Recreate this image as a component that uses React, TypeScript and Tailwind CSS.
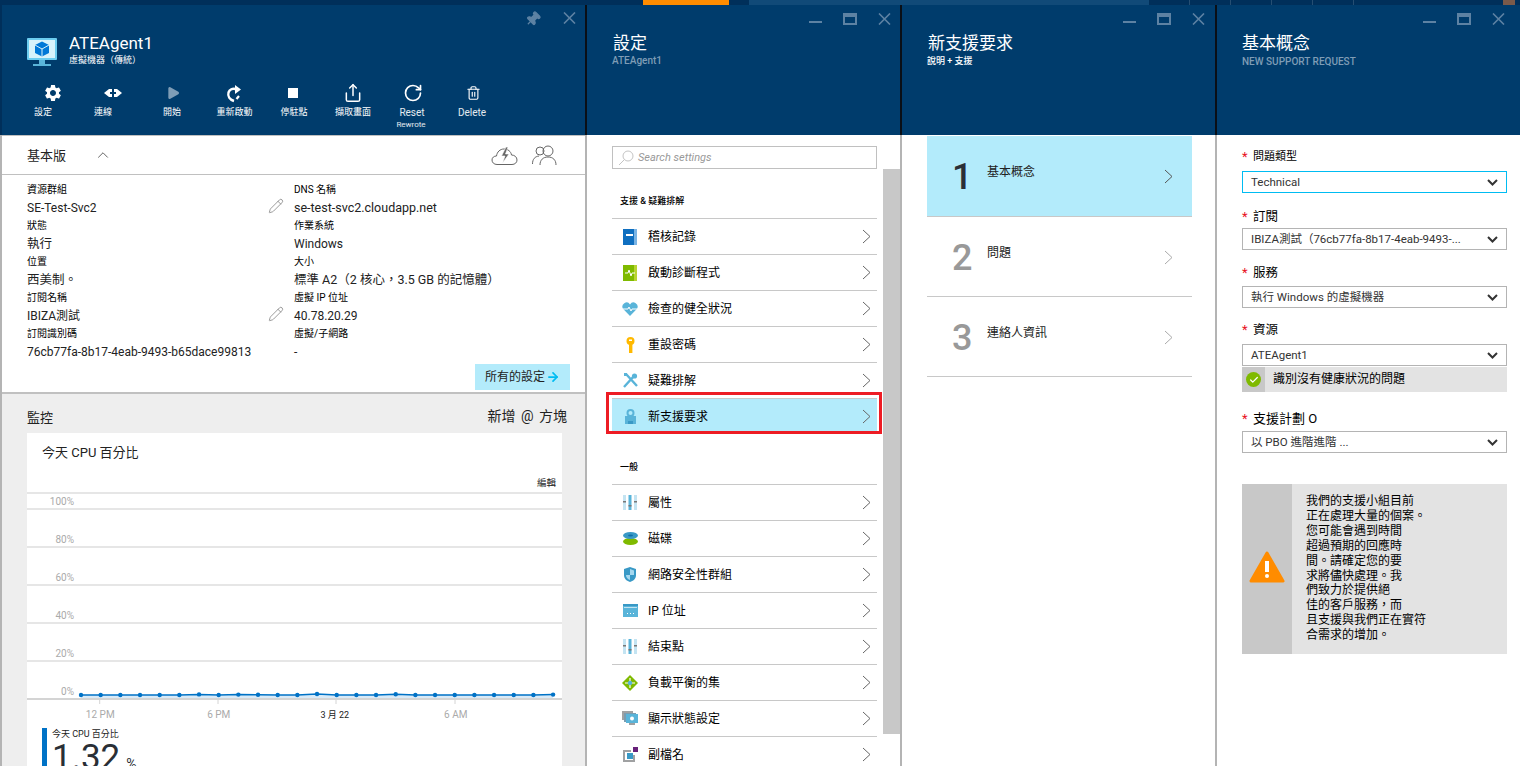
import { ChevronUp, Pin, Play, RotateCw, Share, Trash2, Pencil, ArrowRight, Check } from 'lucide-react';
import { MdSettings } from 'react-icons/md';

const FONT = 'font-["Roboto","Noto_Sans_CJK_TC",sans-serif]';

function CloseX() {
  return (
    <svg width="13" height="12" viewBox="0 0 13 12" className="shrink-0">
      <path d="M1 0.500L12 11.500M12 0.500L1 11.500" stroke="currentColor" strokeWidth="1.6" fill="none" />
    </svg>
  );
}

function WindowControls({ pad }: { pad: string }) {
  return (
    <div className={`flex justify-end items-start gap-[21px] h-[28px] pt-[8px] text-[#5d82a3] ${pad}`}>
      <div className="w-[13px] h-[2px] mt-[8px] bg-current" />
      <div className="w-[14px] h-[12px] border-2 border-t-[4px] border-current" />
      <CloseX />
    </div>
  );
}

function BladeHead({ title, sub, subClass, pad }: { title: string; sub: string; subClass: string; pad: string }) {
  return (
    <div className="h-[130px] bg-[#003c6c] shrink-0 -mr-[2px] border-r-2 border-[#0a0f16]">
      <WindowControls pad={pad} />
      <div className="pl-[25px]">
        <div className="text-[17px] leading-[20px] text-white pl-[1px]">{title}</div>
        <div className={`leading-[12px] mt-[2px] ${subClass}`}>{sub}</div>
      </div>
    </div>
  );
}

function Cmd({ icon, label, sub, dim, labelClass }: { icon: React.ReactNode; label: string; sub?: string; dim?: boolean; labelClass?: string }) {
  return (
    <div className="flex flex-col items-center shrink-0 w-[60px]">
      <div className={`h-[22px] flex items-center justify-center ${dim ? 'text-[#7f9db6]' : 'text-white'}`}>{icon}</div>
      <div className={`leading-[12px] whitespace-nowrap ${labelClass ?? 'text-[9px] text-white mt-[2px]'}`}>{label}</div>
      {sub && <div className="text-[8px] leading-[10px] mt-[1px] mr-[4px] text-white/90">{sub}</div>}
    </div>
  );
}

function Field({ label, value, pencil, big }: { label: string; value: string; pencil?: boolean; big?: boolean }) {
  return (
    <div className="h-[36px] relative">
      <div className="text-[10px] leading-[12px] text-black whitespace-nowrap">{label}</div>
      <div className={`${big ? 'text-[12.500px]' : 'text-[12px]'} leading-[18px] mt-[3px] text-[#222] whitespace-nowrap`}>{value}</div>
      {pencil && <Pencil className="absolute right-[10px] top-[14px] w-[16px] h-[16px] text-[#777]" strokeWidth={1.1} />}
    </div>
  );
}

function RowChevron({ color }: { color: string }) {
  return (
    <svg width="9" height="15" viewBox="0 0 9 15" className={`shrink-0 ${color}`}>
      <path d="M1 1L8 7.500L1 14" stroke="currentColor" strokeWidth="1" fill="none" />
    </svg>
  );
}

function BookIcon() {
  return (
    <svg width="14" height="16" viewBox="0 0 14 16"><rect width="14" height="16" fill="#0f6fc0" /><rect x="11" width="3" height="16" fill="#7ab4e4" /><rect x="3" y="5" width="7" height="2" fill="#fff" /></svg>
  );
}
function DiagIcon() {
  return (
    <svg width="14" height="16" viewBox="0 0 14 16"><rect width="14" height="16" fill="#7fba00" /><rect x="11" width="3" height="16" fill="#b8d432" /><path d="M2 8h3l1-3 2 6 1-3h3" stroke="#fff" strokeWidth="1" fill="none" /></svg>
  );
}
function HeartIcon() {
  return (
    <svg width="16" height="14" viewBox="0 0 16 14"><path d="M8 14L1.200 7A4 4 0 0 1 8 2.400 4 4 0 0 1 14.800 7Z" fill="#59b4d9" /><path d="M1 7h5l1-2 2 4 1-2h5" stroke="#fff" strokeWidth="1" fill="none" /></svg>
  );
}
function KeyIcon() {
  return (
    <svg width="9" height="16" viewBox="0 0 9 16"><circle cx="4.500" cy="4" r="4" fill="#ffb900" /><rect x="3" y="6" width="3.400" height="10" fill="#ffb900" /><rect x="3" y="2.500" width="3" height="1.500" fill="#fff" /></svg>
  );
}
function ToolsIcon() {
  return (
    <svg width="15" height="15" viewBox="0 0 15 15"><path d="M1 14L11 3M3 1l11 12" stroke="#59b4d9" strokeWidth="2.400" /><circle cx="11.500" cy="3" r="2.600" fill="#59b4d9" /><rect x="1" y="0" width="3" height="3" fill="#59b4d9" /></svg>
  );
}
function SupportIcon() {
  return (
    <svg width="11" height="15" viewBox="0 0 11 15"><rect y="7" width="11" height="8" fill="#59b4d9" /><circle cx="5.500" cy="4" r="4" fill="#59b4d9" /><circle cx="5.500" cy="4" r="2" fill="#b3ebfb" /><path d="M3 15v-3h5v3" fill="#3999c6" /></svg>
  );
}
function SlidersIcon() {
  return (
    <svg width="14" height="15" viewBox="0 0 14 15"><rect width="3" height="15" fill="#c4e4f2" /><rect x="5.500" width="3" height="15" fill="#59b4d9" /><rect x="11" width="3" height="15" fill="#c4e4f2" /><rect y="6" width="3" height="1.500" fill="#777" /><rect x="5.500" y="10" width="3" height="1.500" fill="#777" /><rect x="11" y="6" width="3" height="1.500" fill="#777" /></svg>
  );
}
function DiskIcon() {
  return (
    <svg width="15" height="13" viewBox="0 0 15 13"><ellipse cx="7.500" cy="9.500" rx="7.500" ry="3.500" fill="#7fba00" /><ellipse cx="7.500" cy="3.500" rx="7.500" ry="3.500" fill="#3999c6" /><ellipse cx="7.500" cy="3.500" rx="2.500" ry="1" fill="#0f6fa8" /></svg>
  );
}
function ShieldIcon() {
  return (
    <svg width="12" height="15" viewBox="0 0 12 15"><path d="M6 0l6 2v6c0 4-3 6-6 7-3-1-6-3-6-7V2Z" fill="#3999c6" /><path d="M6 2l4 1.400V8H6v5C3.500 12 2 10.500 2 8h4Z" fill="#a5d8ef" /></svg>
  );
}
function IpIcon() {
  return (
    <svg width="15" height="13" viewBox="0 0 15 13"><rect width="15" height="13" fill="#59b4d9" /><rect width="15" height="2" fill="#3999c6" /><rect x="1" y="3" width="13" height="1" fill="#c4e4f2" /><rect x="4" y="9" width="1" height="1" fill="#fff" /><rect x="7" y="9" width="1" height="1" fill="#fff" /><rect x="10" y="9" width="1" height="1" fill="#fff" /></svg>
  );
}
function LbIcon() {
  return (
    <svg width="16" height="16" viewBox="0 0 16 16"><path d="M8 0l8 8-8 8-8-8Z" fill="#7fba00" /><path d="M8 3v10M3 8h10" stroke="#fff" strokeWidth="1.200" /><circle cx="8" cy="8" r="2.200" fill="#59b4d9" /></svg>
  );
}
function ScreensIcon() {
  return (
    <svg width="16" height="15" viewBox="0 0 16 15"><rect width="11" height="9" fill="#a0a1a2" /><rect x="2" y="2" width="12" height="9" fill="#7a9cb0" /><rect x="4" y="3" width="12" height="9" fill="#59b4d9" /><circle cx="10" cy="7.500" r="2" fill="#fff" /><rect x="7" y="12" width="6" height="2" fill="#a0a1a2" /></svg>
  );
}
function AliasIcon() {
  return (
    <svg width="15" height="15" viewBox="0 0 15 15"><path d="M0 3h8v2H2v8h8V8h2v7H0Z" fill="#a0a1a2" /><rect x="4" y="6" width="6" height="6" fill="#3999c6" /><rect x="10" y="0" width="5" height="5" fill="#68217a" /></svg>
  );
}

function MenuRow({ icon, label, active }: { icon: React.ReactNode; label: string; active?: boolean }) {
  return (
    <div className={`h-[36px] border-t border-[#c8c8c8] flex items-center pr-[6px] ${active ? 'bg-[#b3ebfb]' : ''}`}>
      <div className="w-[35px] pl-[1px] flex justify-center shrink-0 mr-[1px]">{icon}</div>
      <div className="flex-1 text-[12px] text-black whitespace-nowrap">{label}</div>
      <RowChevron color="text-[#666]" />
    </div>
  );
}

function ChartSeries() {
  const points = [0, 0, 0, 0, 0, 0, -0.6, 0, -0.4, -0.3, 0, 0, -1, 0, 0, 0, -0.7, 0, 0, 0, 0, 0, 0, 0, -0.4];
  const x = (i: number) => 54 + i * 19.67;
  const d = points.map((p, i) => `${x(i).toFixed(1)},${(p + 262).toFixed(1)}`).join(' ');
  return (
    <svg width="535" height="285" viewBox="0 0 535 285" className="absolute left-0 top-0">
      <path d={`M54,265 L${d.replace(/ /g, ' L')} L526,265Z`} fill="#0072c6" opacity="0.15" />
      <polyline points={d} fill="none" stroke="#0072c6" strokeWidth="1.500" />
      {points.map((p, i) => (
        <circle key={i} cx={x(i)} cy={p + 262} r="2.200" fill="#0072c6" />
      ))}
      {[72.7, 191, 309, 428].map((t) => (
        <line key={t} x1={t} x2={t} y1="267" y2="271" stroke="#d4d4d4" />
      ))}
    </svg>
  );
}

function SelectBox({ value, active }: { value: string; active?: boolean }) {
  return (
    <div className={`h-[22px] border flex items-center justify-between pl-[8px] pr-[8px] ${active ? 'border-[#00bcf2]' : 'border-[#b4b4b4]'}`}>
      <span className="text-[11.500px] text-[#333] whitespace-nowrap pt-[1px]">{value}</span>
      <svg width="11" height="7" viewBox="0 0 11 7" className="text-[#333]">
        <path d="M1 1L5.500 5.500L10 1" stroke="currentColor" strokeWidth="2" fill="none" />
      </svg>
    </div>
  );
}

function FormLabel({ text, size }: { text: string; size: string }) {
  return (
    <div className={`flex items-center h-[18px] text-black whitespace-nowrap ${size}`}>
      <span className="text-[#e81123] w-[11px] text-[13px] leading-[18px]">*</span>
      {text}
    </div>
  );
}

const warningLines = ['我們的支援小組目前', '正在處理大量的個案。', '您可能會遇到時間', '超過預期的回應時', '間。請確定您的要', '求將儘快處理。我', '們致力於提供絕', '佳的客戶服務，而', '且支援與我們正在實符', '合需求的增加。'];

export default function App() {
  return (
    <div className={`w-[1520px] h-[766px] overflow-hidden bg-white flex flex-col ${FONT}`}>
      <div className="h-[5px] shrink-0 bg-[#002f5a] flex">
        <div className="w-[643px]" />
        <div className="w-[86px] bg-[#ff8c00]" />
        <div className="w-[20px]" />
        <div className="w-[400px] bg-[#114a78]" />
        <div className="w-[41px] border-r border-white/15" />
        <div className="w-[41px] border-r border-white/15" />
        <div className="w-[41px] border-r border-white/15" />
        <div className="w-[41px] border-r border-white/15" />
        <div className="w-[41px] border-r border-white/15" />
        <div className="flex-1 flex justify-end pr-[5px]"><div className="w-[12px] h-[5px] bg-[#7a5a4a]" /></div>
      </div>
      <div className="flex-1 flex min-h-0">
        {/* vm blade */}
        <div className="w-[587px] shrink-0 border-x-2 border-[#b4b4b4] flex flex-col min-h-0">
          <div className="h-[130px] bg-[#003c6c] shrink-0 -mx-[2px] border-x-2 border-l-[#002f5a] border-r-[#0a0f16]">
            <div className="flex justify-end items-start gap-[22px] h-[22px] pr-[9px] pt-[7px] text-[#5d82a3]">
              <Pin className="w-[16px] h-[16px] rotate-45 -mt-[1px]" fill="currentColor" />
              <CloseX />
            </div>
            <div className="flex items-start pl-[25px] h-[33px] mt-[6px]">
              <svg width="30" height="28" viewBox="0 0 30 28" className="mt-[5px] shrink-0">
                <rect width="30" height="22" rx="1" fill="#6ccdf0" />
                <rect x="2" y="2" width="26" height="18" fill="#d8f3fb" />
                <path d="M15 3.500l7 3.500v8l-7 3.500-7-3.500V7Z" fill="#0078d7" />
                <path d="M15 11l7-4M15 11L8 7M15 11v7.500" stroke="#d8f3fb" strokeWidth="1" fill="none" />
                <rect x="12" y="22" width="6" height="4" fill="#59b4d9" />
                <rect x="6" y="26" width="18" height="2" fill="#59b4d9" />
              </svg>
              <div className="ml-[12px]">
                <div className="text-[17px] leading-[20px] text-white">ATEAgent1</div>
                <div className="text-[9px] leading-[12px] mt-[1px] text-white whitespace-nowrap">虛擬機器（傳統）</div>
              </div>
            </div>
            <div className="flex pl-[21px] mt-[16px]">
              <Cmd label="設定" labelClass="text-[9px] text-white mt-[2px] mr-[20px]" icon={<MdSettings className="w-[20px] h-[20px]" />} />
              <Cmd label="連線" labelClass="text-[9px] text-white mt-[2px] mr-[20px]" icon={<svg width="18" height="10" viewBox="0 0 18 10"><path d="M0 5L5 1h3v3H6v2h2v3H5ZM18 5l-5 4h-3V6h2V4h-2V1h3Z" fill="currentColor" /></svg>} />
              <Cmd dim label="開始" labelClass="text-[9px] text-white mt-[2px] mr-[2px]" icon={<Play className="w-[16px] h-[18px]" fill="currentColor" strokeWidth={0} />} />
              <Cmd label="重新啟動" labelClass="text-[9px] text-white mt-[2px] ml-[3px]" icon={<svg width="17" height="19" viewBox="0 0 17 19"><path d="M9 17C4.500 15.500 2.500 12 3.500 8.500C4.500 5.500 7.500 4.200 10.500 5" stroke="currentColor" strokeWidth="2.400" fill="none" /><path d="M10 1l6 4.500-6 4.500Z" fill="currentColor" /><path d="M14 12l-2.500 3" stroke="currentColor" strokeWidth="2.200" /></svg>} />
              <Cmd label="停駐點" labelClass="text-[9px] text-white mt-[2px] ml-[2px]" icon={<div className="w-[10px] h-[10px] bg-white" />} />
              <Cmd label="擷取畫面" icon={<Share className="w-[20px] h-[20px]" strokeWidth={1.800} />} />
              <Cmd label="Reset" sub="Rewrote" labelClass="text-[10px] text-white/90 mt-[3px] mr-[2px]" icon={<RotateCw className="w-[20px] h-[20px]" strokeWidth={2} />} />
              <Cmd label="Delete" labelClass="text-[10px] text-white/90 mt-[3px] mr-[2px]" icon={<Trash2 className="w-[15px] h-[16px]" strokeWidth={1.800} />} />
            </div>
          </div>
          <div className="h-[40px] shrink-0 border-t border-b border-[#c0c0c0] flex items-center pl-[25px] pr-[28px]">
            <span className="text-[13px] text-[#222] pt-[1px]">基本版</span>
            <ChevronUp className="w-[18px] h-[18px] text-[#555] ml-[28px]" strokeWidth={1.200} />
            <div className="flex-1" />
            <svg width="27" height="21" viewBox="0 0 27 21" fill="none" stroke="#666" strokeWidth="1">
              <path d="M6 19.500C3 19.500 1 17.500 1 15C1 12.500 3 11 5.500 11C6 7 9 4 13 4C17 4 20 6.500 20.500 10C23.500 10 26 12 26 15C26 17.500 24 19.500 21 19.500Z" />
              <path d="M15 2L10.500 11H14L11.500 18L18 9H14.500L17 2Z" fill="#666" stroke="#fff" strokeWidth="0.600" />
            </svg>
            <svg width="25" height="21" viewBox="0 0 25 21" fill="none" stroke="#666" strokeWidth="1" className="ml-[14px]">
              <circle cx="8" cy="6" r="4" />
              <path d="M0.500 19C0.500 14 3 11.500 7 11" />
              <circle cx="16" cy="6" r="5" />
              <path d="M8 20C8 15 11 12 16 12C21 12 24 15 24 20" />
            </svg>
          </div>
          <div className="h-[219px] shrink-0 border-b-2 border-[#c0c0c0] relative pt-[9px] pl-[25px]">
            <div className="grid grid-cols-[267px_260px]">
              <div>
                <Field label="資源群組" value="SE-Test-Svc2" pencil />
                <Field label="狀態" value="執行" big />
                <Field label="位置" value="西美制。" big />
                <Field label="訂閱名稱" value="IBIZA測試" pencil />
                <Field label="訂閱識別碼" value="76cb77fa-8b17-4eab-9493-b65dace99813" />
              </div>
              <div>
                <Field label="DNS 名稱" value="se-test-svc2.cloudapp.net" big />
                <Field label="作業系統" value="Windows" />
                <Field label="大小" value="標準 A2（2 核心，3.5 GB 的記憶體）" big />
                <Field label="虛擬 IP 位址" value="40.78.20.29" />
                <Field label="虛擬/子網路" value="-" />
              </div>
            </div>
            <div className="absolute right-[15px] bottom-[2px] h-[26px] w-[95px] bg-[#b3ebfb] flex items-center justify-center text-[12px] text-[#222]">
              所有的設定
              <ArrowRight className="w-[14px] h-[14px] text-[#00bcf2] ml-[1px]" strokeWidth={3} />
            </div>
          </div>
          <div className="flex-1 bg-[#eeeeee] pl-[25px] min-h-0 overflow-hidden">
            <div className="flex justify-between items-start h-[39px] w-[535px]">
              <span className="text-[13px] leading-[18px] text-[#222] mt-[15px]">監控</span>
              <span className="text-[14px] leading-[18px] text-[#222] mt-[13px] -mr-[5px] whitespace-nowrap [word-spacing:2px]">新增 @ 方塊</span>
            </div>
            <div className="bg-white h-[400px] relative w-[535px]">
              <div className="text-[13px] text-[#222] pl-[15px] pt-[11px] leading-[18px]">今天 CPU 百分比</div>
              <div className="text-right text-[9.500px] text-[#222] pr-[6px] pt-[14px] leading-[13px]">編輯</div>
              <div className="mt-[3px] border-t-2 border-[#e6e6e6]">
                {['100%', '80%', '60%', '40%', '20%', '0%'].map((t, i) => (
                  <div key={t} className={`${i === 0 ? 'h-[16px]' : 'h-[38px]'} ${i === 5 ? 'border-[#d4d4d4]' : 'border-[#e6e6e6]'} border-b-2 flex items-end`}>
                    <span className="w-[47px] text-right text-[10px] leading-[12px] text-[#aaa]">{t}</span>
                  </div>
                ))}
              </div>
              <ChartSeries />
              <div className="h-[12px] mt-[9px] flex pl-[14px] text-[10px] leading-[12px] text-[#aaa]">
                <span className="w-[118.500px] text-center">12 PM</span>
                <span className="w-[118.500px] text-center">6 PM</span>
                <span className="w-[118.500px] text-center text-[#222] text-[9px] pr-[5px]">3 月 22</span>
                <span className="w-[118.500px] text-center">6 AM</span>
              </div>
              <div className="ml-[15px] mt-[7px] border-l-[5px] border-[#0072c6] pl-[5px] h-[50px]">
                <div className="text-[9px] leading-[12px] text-[#222] whitespace-nowrap">今天 CPU 百分比</div>
                <div className="text-[35px] leading-[36px] text-[#2a2f36] whitespace-nowrap">1.32<span className="text-[14px] ml-[6px]">%</span></div>
              </div>
            </div>
          </div>
        </div>
        {/* settings blade */}
        <div className="w-[315px] shrink-0 border-r-2 border-[#b4b4b4] flex flex-col min-h-0 relative">
          <BladeHead title="設定" sub="ATEAgent1" subClass="text-[10px] font-medium text-[#7f9db6]" pad="pr-[9px]" />
          <div className="pl-[25px] pr-[23px] pt-[11px] flex-1 min-h-0">
            <div className="h-[23px] border border-[#c0c0c0] flex items-center pl-[5px] text-[11px] italic text-[#999] whitespace-nowrap">
              <svg width="16" height="16" viewBox="0 0 16 16" fill="none" stroke="#c4c4c4" strokeWidth="1" className="mr-[4px]">
                <circle cx="10" cy="6" r="5" />
                <path d="M6.500 9.500L1 15" />
              </svg>
              <span className="pt-[2px]">Search settings</span>
            </div>
            <div className="text-[9px] leading-[12px] text-black mt-[26px] mb-[11px] pl-[8px] font-medium">支援 & 疑難排解</div>
            <MenuRow icon={<BookIcon />} label="稽核記錄" />
            <MenuRow icon={<DiagIcon />} label="啟動診斷程式" />
            <MenuRow icon={<HeartIcon />} label="檢查的健全狀況" />
            <MenuRow icon={<KeyIcon />} label="重設密碼" />
            <MenuRow icon={<ToolsIcon />} label="疑難排解" />
            <div className="relative">
              <MenuRow icon={<SupportIcon />} label="新支援要求" active />
              <div className="absolute -left-[6px] -right-[5px] -top-[6px] bottom-0 border-[3px] border-[#ed1c24]" />
            </div>
            <div className="text-[9px] leading-[12px] text-black mt-[27px] mb-[11px] pl-[8px] font-medium">一般</div>
            <MenuRow icon={<SlidersIcon />} label="屬性" />
            <MenuRow icon={<DiskIcon />} label="磁碟" />
            <MenuRow icon={<ShieldIcon />} label="網路安全性群組" />
            <MenuRow icon={<IpIcon />} label="IP 位址" />
            <MenuRow icon={<SlidersIcon />} label="結束點" />
            <MenuRow icon={<LbIcon />} label="負載平衡的集" />
            <MenuRow icon={<ScreensIcon />} label="顯示狀態設定" />
            <MenuRow icon={<AliasIcon />} label="副檔名" />
          </div>
          <div className="absolute right-0 top-[164px] w-[17px] h-[565px] bg-[#c8c8c8]" />
        </div>
        {/* new support request blade */}
        <div className="w-[315px] shrink-0 border-r-2 border-[#b4b4b4] flex flex-col">
          <BladeHead title="新支援要求" sub="說明 + 支援" subClass="text-[9px] font-medium text-white" pad="pr-[10px]" />
          <div className="pl-[25px] pr-[23px] pt-[1px]">
            {[['1', '基本概念'], ['2', '問題'], ['3', '連絡人資訊']].map(([n, t], i) => (
              <div key={n} className={`flex border-b border-[#c8c8c8] ${i === 0 ? 'h-[81px] bg-[#b3ebfb]' : 'h-[80px]'}`}>
                <div className={`w-[60px] pl-[25px] pt-[19px] text-[36px] leading-[44px] font-medium ${i === 0 ? 'text-[#2a2f36]' : 'text-[#999]'}`}>{n}</div>
                <div className="flex-1 text-[12px] text-[#222] pt-[27px]">{t}</div>
                <div className="pt-[33px] pr-[19px]"><RowChevron color={i === 0 ? 'text-[#555]' : 'text-[#aaa]'} /></div>
              </div>
            ))}
          </div>
        </div>
        {/* basics blade */}
        <div className="flex-1 flex flex-col min-w-0">
          <div className="h-[130px] bg-[#003c6c] shrink-0">
            <WindowControls pad="pr-[15px]" />
            <div className="pl-[25px]">
              <div className="text-[17px] leading-[20px] text-white">基本概念</div>
              <div className="text-[10px] font-medium leading-[12px] mt-[3px] text-[#7f9db6]">NEW SUPPORT REQUEST</div>
            </div>
          </div>
          <div className="pl-[25px] pr-[13px] pt-[13px]">
            <FormLabel text="問題類型" size="text-[11px]" />
            <div className="mt-[5px]"><SelectBox value="Technical" active /></div>
            <div className="mt-[15px]"><FormLabel text="訂閱" size="text-[12.500px]" /></div>
            <div className="mt-[2px]"><SelectBox value="IBIZA測試（76cb77fa-8b17-4eab-9493-..." /></div>
            <div className="mt-[14px]"><FormLabel text="服務" size="text-[12.500px]" /></div>
            <div className="mt-[4px]"><SelectBox value="執行 Windows 的虛擬機器" /></div>
            <div className="mt-[13px]"><FormLabel text="資源" size="text-[12.500px]" /></div>
            <div className="mt-[5px]"><SelectBox value="ATEAgent1" /></div>
            <div className="flex h-[25px] bg-[#e3e3e3] mt-[1px]">
              <div className="w-[23px] bg-[#c8c8c8] flex items-center justify-center">
                <div className="w-[15px] h-[15px] rounded-full bg-[#7fba00] flex items-center justify-center">
                  <Check className="w-[10px] h-[10px] text-white" strokeWidth={3} />
                </div>
              </div>
              <div className="pl-[8px] text-[12px] text-black leading-[25px] whitespace-nowrap">識別沒有健康狀況的問題</div>
            </div>
            <div className="mt-[18px]"><FormLabel text="支援計劃 O" size="text-[13px]" /></div>
            <div className="mt-[3px]"><SelectBox value="以 PBO 進階進階 ..." /></div>
            <div className="flex h-[170px] mt-[31px]">
              <div className="w-[50px] bg-[#c8c8c8] flex items-center justify-center pb-[4px]">
                <svg width="36" height="32" viewBox="0 0 36 32">
                  <path d="M18 2L34 30H2Z" fill="#ff8c00" stroke="#ff8c00" strokeWidth="3" strokeLinejoin="round" />
                  <rect x="16" y="10" width="4" height="11" fill="#fff" />
                  <rect x="16" y="23" width="4" height="4" rx="2" fill="#fff" />
                </svg>
              </div>
              <div className="flex-1 bg-[#e3e3e3] pl-[14px] pt-[10px] text-[12px] leading-[14.900px] text-black whitespace-nowrap">
                {warningLines.map((l) => (
                  <div key={l}>{l}</div>
                ))}
              </div>
            </div>
          </div>
        </div>
      </div>
    </div>
  );
}
